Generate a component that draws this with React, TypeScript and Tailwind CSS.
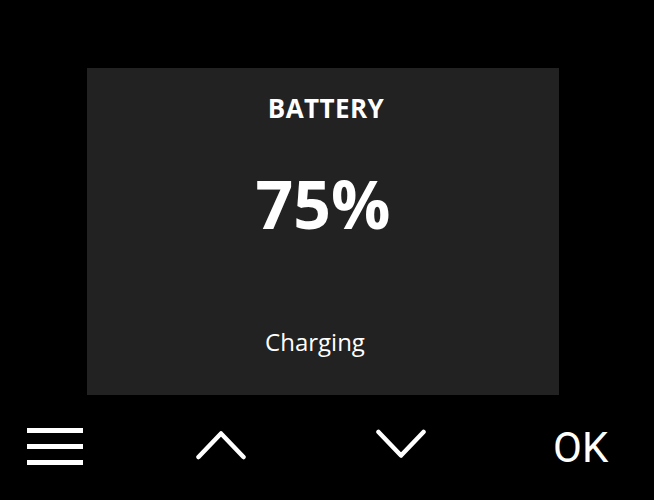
import React from 'react';

const Chevron: React.FC<{ dir: 'up' | 'down' }> = ({ dir }) => (
  <svg width="50" height="31" viewBox="0 0 50 31" fill="none" className="block">
    <polyline
      points={dir === 'up' ? '2.5,28 25,4.5 47.5,28' : '2.5,3 25,26.5 47.5,3'}
      stroke="white"
      strokeWidth="4.5"
      strokeLinecap="round"
      strokeLinejoin="round"
    />
  </svg>
);

export default function App() {
  return (
    <div className="w-[654px] h-[500px] bg-black overflow-hidden" style={{ fontFamily: '"Open Sans", sans-serif' }}>
      {/* Display panel */}
      <div className="ml-[87px] pt-[68px]">
        <div className="w-[472px] h-[327px] bg-[#222222] flex flex-col items-center text-white">
          <div className="mt-[27px] ml-[6px] text-[26px] font-bold leading-none tracking-[0.4px]">BATTERY</div>
          <div className="mt-[49px] text-[66px] font-bold leading-none">75%</div>
          <div className="mt-[94px] mr-[16px] text-[24px] leading-none">Charging</div>
        </div>
      </div>

      {/* Buttons */}
      <div className="flex items-start mt-[33px] pl-[27px] text-white">
        <div className="w-[56px] flex flex-col gap-[11px]">
          <div className="h-[5px] bg-white" />
          <div className="h-[5px] bg-white" />
          <div className="h-[5px] bg-white" />
        </div>
        <div className="ml-[113px] mt-[1px]">
          <Chevron dir="up" />
        </div>
        <div className="ml-[130px] mt-[1px]">
          <Chevron dir="down" />
        </div>
        <div
          className="ml-[127px] text-[42px] leading-none -mt-[1px]"
          style={{ fontFamily: 'Roboto, sans-serif' }}
        >
          OK
        </div>
      </div>
    </div>
  );
}
